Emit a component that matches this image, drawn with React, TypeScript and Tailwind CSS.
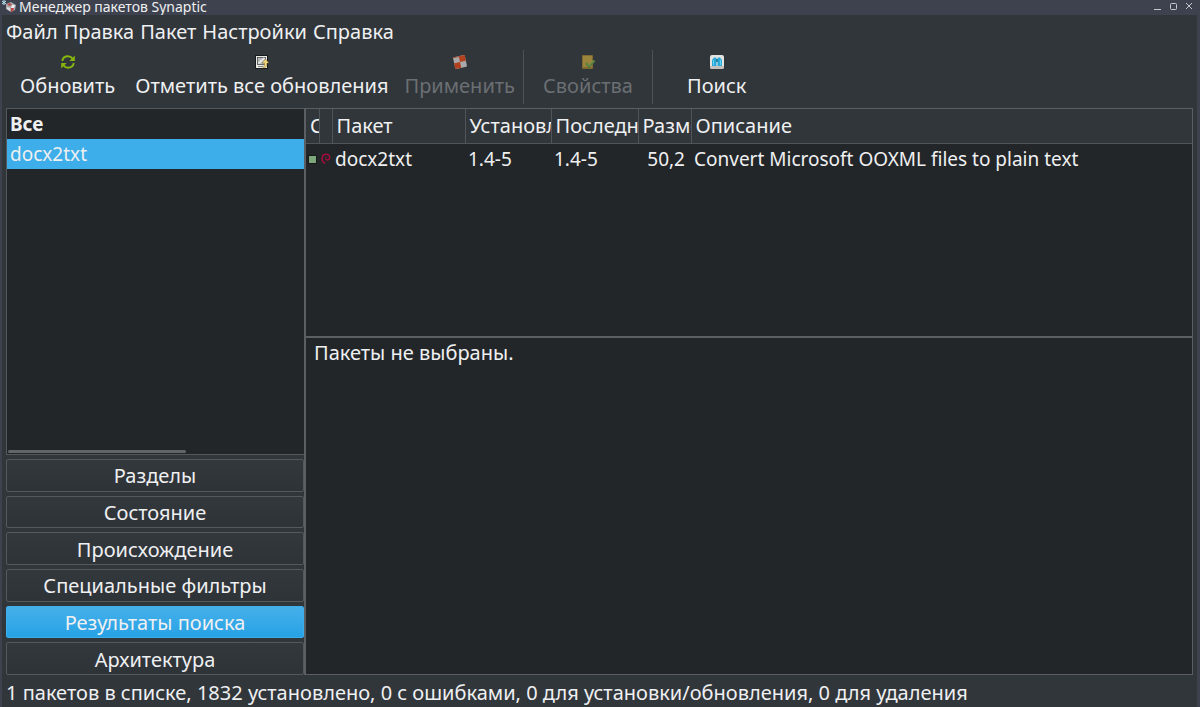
import { useState } from "react";
import clsx from "clsx";

interface ToolButtonProps {
  label: string;
  icon: React.ReactNode;
  className: string;
  disabled?: boolean;
}

const menus = ["Файл", "Правка", "Пакет", "Настройки", "Справка"];

const views = [
  "Разделы",
  "Состояние",
  "Происхождение",
  "Специальные фильтры",
  "Результаты поиска",
  "Архитектура",
];

const filters = ["Все", "docx2txt"];

const columns = [
  { title: "С", width: "w-[13px]" },
  { title: "", width: "w-[13px]" },
  { title: "Пакет", width: "w-[133px]" },
  { title: "Установленная версия", width: "w-[86px]" },
  { title: "Последняя версия", width: "w-[87px]" },
  { title: "Размер", width: "w-[53px]" },
  { title: "Описание", width: "" },
];

const AppIcon = () => (
  <svg width="16" height="14" viewBox="0 0 16 14" aria-hidden="true">
    <path d="M2 0v5M0 1l4 3M4 1L0 4" stroke="#b8e4f5" strokeWidth="1" />
    <path d="M4 4l5-2 5 3-1 5-4 2-5-3z" fill="#a9a9ad" />
    <path d="M5 4l3-1 2 2-3 1z" fill="#b74a4a" />
    <path d="M10 5l3 0-1 3-3 0z" fill="#eeeeee" />
    <path d="M9 8l3 0-1 3-2 1z" fill="#c44343" />
    <path d="M5 7l3 1 0 3-3-2z" fill="#dedede" />
  </svg>
);

const ReloadIcon = () => (
  <svg width="16" height="16" viewBox="0 0 16 16" fill="none" aria-hidden="true">
    <path d="M2.2 7C2.800 4 5 2.300 8 2.300c2 0 3.600.900 4.600 2.400" stroke="#86b50d" strokeWidth="1.900" />
    <path d="M13.800 9c-.600 3-2.800 4.700-5.800 4.700-2 0-3.600-.900-4.600-2.400" stroke="#86b50d" strokeWidth="1.900" />
    <path d="M14.800 1.500V7H9.300z" fill="#86b50d" />
    <path d="M1.200 14.500V9h5.500z" fill="#86b50d" />
  </svg>
);

const UpgradeIcon = () => (
  <svg width="16" height="16" viewBox="0 0 16 16" aria-hidden="true">
    <rect x="1" y="1" width="13" height="14" rx="1" fill="#17191b" />
    <rect x="2" y="2" width="11" height="12" fill="#e9e9e6" />
    <rect x="3.500" y="3.500" width="8" height="7" fill="#b2b5b4" stroke="#3a3d3e" strokeWidth=".700" />
    <path d="M4.500 9.500l6-5.500" stroke="#e4e6e5" strokeWidth="2" />
    <path d="M4 12.500h5" stroke="#85898a" />
    <path d="M11.500 5l3.500 4h-2c0 3-1 5-4.500 5 2-1.500 2-3 2-5H8z" fill="#f2d478" stroke="#6e5a25" strokeWidth=".4" />
  </svg>
);

const ApplyIcon = () => (
  <svg width="16" height="16" viewBox="0 0 16 16" aria-hidden="true">
    <g transform="rotate(-12 8 8)">
      <rect x="2" y="2" width="12" height="12" rx="1" fill="#a9a9a9" />
      <path d="M8 2h6v6H8zM2 8h6v6H2z" fill="#b3401f" />
      <path d="M2 3V2h6v1z" fill="#a84a30" />
    </g>
  </svg>
);

const PropertiesIcon = () => (
  <svg width="16" height="16" viewBox="0 0 16 16" aria-hidden="true">
    <rect x="2" y="1" width="11" height="14" rx="1" fill="#80692f" />
    <rect x="3" y="2" width="9" height="11" fill="#9b843b" />
    <path d="M6 9l3 3.500 5.500-6" fill="none" stroke="#597b3c" strokeWidth="2.500" />
    <path d="M7 9.500l2 2 4.500-5" fill="none" stroke="#7c9b58" strokeWidth="1" />
  </svg>
);

const SearchIcon = () => (
  <svg width="16" height="16" viewBox="0 0 16 16" aria-hidden="true">
    <rect x="1" y="1" width="14" height="14" rx="2" fill="#e5e3e1" />
    <path d="M1 12h14v1a2 2 0 0 1-2 2H3a2 2 0 0 1-2-2z" fill="#c3c0be" />
    <path d="M5 3.500h2l.500 1V12H3V6zM9 3.500h2L13 6v6H8.500V4.500z" fill="#28abd9" />
    <path d="M7.200 5h1.600v3H7.200z" fill="#176b91" />
    <path d="M4.500 6v5M11.500 6v5" stroke="#66d1f1" />
  </svg>
);

const DebianIcon = () => (
  <svg width="10" height="12" viewBox="0 0 10 12" fill="none" aria-hidden="true">
    <path
      d="M4 10.500C1.500 9 .700 6.500 1.200 4.300 1.800 2 4 .800 6.200 1.300 8.500 1.900 9.200 4 8.400 5.600 7.500 7.200 5.500 7.400 4.600 6.200"
      stroke="#b5093f"
      strokeWidth="1.300"
    />
    <path d="M4.600 6.200C4 5 4.700 3.800 6 4" stroke="#b5093f" strokeWidth=".800" />
  </svg>
);

const ToolButton = ({ label, icon, className, disabled }: ToolButtonProps) => (
  <button
    disabled={disabled}
    className={clsx(
      "flex flex-col items-center whitespace-nowrap disabled:text-[#6b6f73]",
      className
    )}
  >
    {icon}
    <span className="mt-[2px] leading-7">{label}</span>
  </button>
);

const ToolSeparator = () => <div className="h-[54px] w-px bg-[#4d5256]" />;

const App = () => {
  const [filter, setFilter] = useState("docx2txt");
  const [view, setView] = useState("Результаты поиска");

  return (
    <div className="flex h-screen flex-col bg-[#3d424e] pr-[3px] pl-[2px] font-['Noto_Sans',sans-serif] text-[20px] text-[#eff0f1]">
      <header className="flex h-[15px] shrink-0 items-start justify-between pr-1">
        <div className="flex items-start gap-px">
          <AppIcon />
          <h1 className="text-[14px] leading-[14px]">Менеджер пакетов Synaptic</h1>
        </div>
        <div className="flex gap-2 pt-[2px] text-[#c6c9ce]">
          <button aria-label="Свернуть">
            <svg width="8" height="8" viewBox="0 0 8 8">
              <path d="M1 7.500h7" stroke="currentColor" />
            </svg>
          </button>
          <button aria-label="Развернуть">
            <svg width="8" height="8" viewBox="0 0 8 8">
              <rect x="1.500" y="1.500" width="6" height="6" rx="1" fill="none" stroke="currentColor" />
            </svg>
          </button>
          <button aria-label="Закрыть">
            <svg width="8" height="8" viewBox="0 0 8 8">
              <path d="M1 1l6 6M7 1L1 7" stroke="currentColor" />
            </svg>
          </button>
        </div>
      </header>

      <div className="flex min-h-0 flex-1 flex-col bg-[#31363b]">
        <nav className="flex h-[34px] shrink-0 items-center gap-[6px] pl-1">
          {menus.map((menu) => (
            <button key={menu}>{menu}</button>
          ))}
        </nav>

        <div className="flex h-[59px] shrink-0 items-start pt-px pl-[6px]">
          <ToolButton className="px-3 pt-1" label="Обновить" icon={<ReloadIcon />} />
          <ToolButton className="px-2 pt-1" label="Отметить все обновления" icon={<UpgradeIcon />} />
          <ToolButton className="px-2 pt-1" label="Применить" icon={<ApplyIcon />} disabled />
          <ToolSeparator />
          <ToolButton className="px-[19px] pt-1" label="Свойства" icon={<PropertiesIcon />} disabled />
          <ToolSeparator />
          <ToolButton className="px-[34px] pt-1" label="Поиск" icon={<SearchIcon />} />
        </div>

        <main className="flex min-h-0 flex-1 pr-1 pl-1">
          <aside className="flex w-[298px] shrink-0 flex-col gap-1">
            <div className="flex min-h-0 flex-1 flex-col border border-r-0 border-[#53585c] bg-[#232629] text-[19px]">
              <ul>
                {filters.map((item) => (
                  <li key={item}>
                    <button
                      onClick={() => setFilter(item)}
                      className={clsx(
                        "block h-[30px] w-full px-[3px] text-left leading-[31px]",
                        item === "Все" && "font-bold",
                        item === filter && "bg-[#3daee9]"
                      )}
                    >
                      {item}
                    </button>
                  </li>
                ))}
              </ul>
              <div className="mt-auto mb-px ml-px h-[3px] w-3/5 rounded-full bg-[#616568]" />
            </div>
            <div className="grid h-[216px] auto-rows-fr gap-1">
              {views.map((item) => (
                <button
                  key={item}
                  onClick={() => setView(item)}
                  className={clsx(
                    "flex items-center justify-center rounded-xs border pt-[2px] leading-7",
                    item === view
                      ? "border-[#3daee9] bg-linear-to-b from-[#45b0ea] to-[#25a2e6]"
                      : "border-[#54595d] bg-linear-to-b from-[#33383d] to-[#2e3338]"
                  )}
                >
                  {item}
                </button>
              ))}
            </div>
          </aside>

          <div className="flex min-w-0 flex-1 flex-col border border-l-2 border-[#5b5f63] bg-[#232629]">
            <section className="h-[227px] shrink-0 overflow-hidden">
              <table className="w-full table-fixed border-collapse whitespace-nowrap">
                <thead>
                  <tr className="h-[34px] bg-[#31363b]">
                    {columns.map((column, i) => (
                      <th
                        key={i}
                        className={clsx(
                          "overflow-hidden border-r border-b border-[#505559] p-0 pl-1 text-left font-normal last:border-r-0",
                          column.width
                        )}
                      >
                        {column.title}
                      </th>
                    ))}
                  </tr>
                </thead>
                <tbody className="text-[19px]">
                  <tr className="h-8">
                    <td className="p-0 pl-[2px]">
                      <div className="h-[9px] w-[9px] border border-[#151a17] bg-[#7da67d]" />
                    </td>
                    <td className="p-0 pl-[2px]">
                      <DebianIcon />
                    </td>
                    <td className="p-0 pl-[3px]">docx2txt</td>
                    <td className="p-0 pl-[3px]">1.4-5</td>
                    <td className="p-0 pl-[3px]">1.4-5</td>
                    <td className="p-0 pr-[6px] text-right">50,2</td>
                    <td className="p-0 pl-[3px]">Convert Microsoft OOXML files to plain text</td>
                  </tr>
                </tbody>
              </table>
            </section>
            <section className="min-h-0 flex-1 border-t-2 border-[#5b5f63] px-2 py-px">
              <p className="leading-7">Пакеты не выбраны.</p>
            </section>
          </div>
        </main>

        <footer className="flex h-8 shrink-0 items-center px-1 pt-1 whitespace-nowrap">
          1 пакетов в списке, 1832 установлено, 0 с ошибками, 0 для установки/обновления, 0 для удаления
        </footer>
      </div>
    </div>
  );
};

export default App;
